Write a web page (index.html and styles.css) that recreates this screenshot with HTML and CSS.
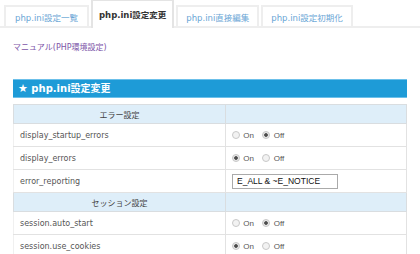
FILE: index.html
```html
<!DOCTYPE html>
<html>
<head>
    <meta charset="utf-8" />
    <title>php.ini設定変更</title>
    <link rel="stylesheet" href="styles.css">
</head>
<body>
    <ul class="tabs">
        <li><a href="#">php.ini設定一覧</a></li>
        <li class="active"><a href="#">php.ini設定変更</a></li>
        <li><a href="#">php.ini直接編集</a></li>
        <li><a href="#">php.ini設定初期化</a></li>
    </ul>
    <div class="content">
        <p class="manual"><a href="#">マニュアル(PHP環境設定)</a></p>
        <h2 class="title"><span class="star">★</span> php.ini設定変更</h2>
        <table class="settings">
            <tr class="group">
                <th>エラー設定</th>
                <th></th>
            </tr>
            <tr>
                <td>display_startup_errors</td>
                <td>
                    <label><input type="radio" name="dse"> On</label>
                    <label><input type="radio" name="dse" checked> Off</label>
                </td>
            </tr>
            <tr>
                <td>display_errors</td>
                <td>
                    <label><input type="radio" name="de" checked> On</label>
                    <label><input type="radio" name="de"> Off</label>
                </td>
            </tr>
            <tr>
                <td>error_reporting</td>
                <td><input type="text" class="text" value="E_ALL &amp; ~E_NOTICE"></td>
            </tr>
            <tr class="group">
                <th>セッション設定</th>
                <th></th>
            </tr>
            <tr>
                <td>session.auto_start</td>
                <td>
                    <label><input type="radio" name="sas"> On</label>
                    <label><input type="radio" name="sas" checked> Off</label>
                </td>
            </tr>
            <tr>
                <td>session.use_cookies</td>
                <td>
                    <label><input type="radio" name="suc" checked> On</label>
                    <label><input type="radio" name="suc"> Off</label>
                </td>
            </tr>
        </table>
    </div>
</body>
</html>
```

FILE: styles.css
```css
body {
    margin: 0;
    font-family: "DejaVu Sans", "Noto Sans CJK JP", sans-serif;
    font-size: 8px;
    color: #555;
    background: #fff;
}

a {
    text-decoration: none;
}

.tabs {
    display: flex;
    align-items: flex-end;
    gap: 2px;
    list-style: none;
    margin: 0;
    padding: 1px 0 0 4px;
    border-bottom: 2px solid #eee;
    height: 25px;
}

.tabs li {
    flex: none;
    height: 19px;
    border: 2px solid #eee;
    border-bottom: none;
    padding: 0 8px;
    display: flex;
    align-items: center;
    font-size: 8.5px;
    white-space: nowrap;
}

.tabs li:first-child {
    padding: 0 9px;
}

.tabs li a {
    color: #6aa6d6;
}

.tabs li.active {
    height: 25px;
    border-color: #e4e4e4;
    background: #fff;
    margin-bottom: -2px;
    padding: 0 6px 2px;
}

.tabs li.active a {
    color: #333;
    font-weight: bold;
}

.content {
    padding: 0 13px;
}

.manual {
    margin: 14px 0 0;
    font-size: 8px;
    line-height: 12px;
}

.manual a {
    color: #7d55a8;
}

.title {
    margin: 25px 0 0;
    height: 17px;
    line-height: 17px;
    background: #1e9bd7;
    border-top: 1px solid #6cc0ea;
    border-bottom: 1px solid #6cc0ea;
    color: #fff;
    font-size: 10px;
    padding-left: 5px;
}

.star {
    font-size: 11px;
}

.settings {
    width: 100%;
    margin-top: 6px;
    border-collapse: collapse;
}

.settings th,
.settings td {
    border: 1px solid #e2e2e2;
    text-align: left;
    padding: 0 6px;
}

.settings td {
    height: 22px;
}

.settings td:first-child {
    width: 199px;
    border-left-color: #f0f0f0;
}

.settings tr.group th {
    background: #deeef9;
    height: 18px;
    font-weight: normal;
    color: #444;
    text-align: center;
    border-color: #d9dde0;
}

.settings label {
    margin-right: 6px;
    font-family: "Liberation Sans", Arial, sans-serif;
    font-size: 8px;
}

.settings input[type=radio] {
    appearance: none;
    width: 8px;
    height: 8px;
    margin: 0 1px 0 0;
    border: 1px solid #c8c8c8;
    border-radius: 50%;
    background: #f2f2f2;
    vertical-align: -1px;
}

.settings input[type=radio]:checked {
    background: radial-gradient(circle, #444 0, #555 1.5px, #e8e8e8 2.2px);
}

.text {
    width: 96px;
    height: 11px;
    border: 1px solid #aaa;
    padding: 1px 4px;
    font-family: "Liberation Sans", Arial, sans-serif;
    font-size: 8.5px;
    color: #111;
}
```
